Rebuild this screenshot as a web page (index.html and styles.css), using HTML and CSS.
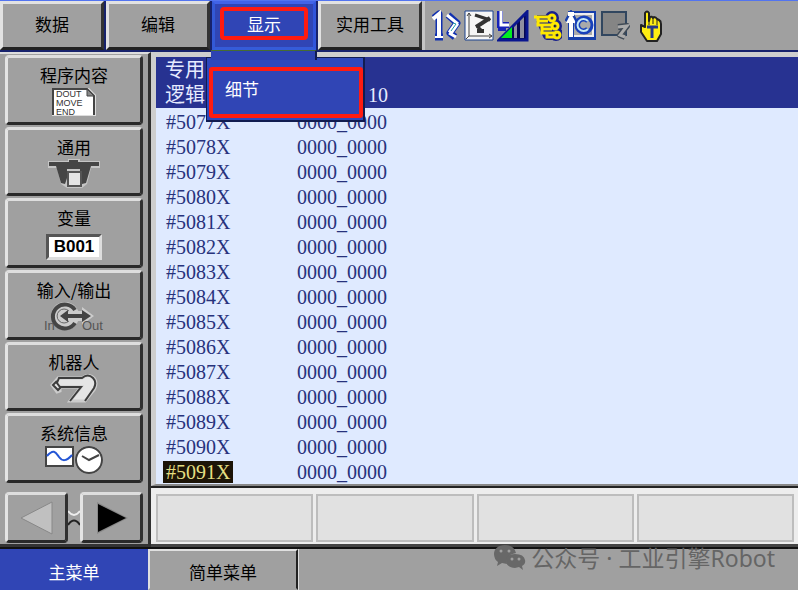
FILE: index.html
```html
<!DOCTYPE html>
<html lang="zh-CN">
<head>
<meta charset="utf-8">
<title>专用输入</title>
<link rel="stylesheet" href="styles.css">
</head>
<body>
<div class="pendant">
  <header class="top">
    <nav class="menus">
      <button class="menu">数据</button>
      <button class="menu">编辑</button>
      <div class="menu-wrap">
        <button class="menu active"><span class="mark">显示</span></button>
        <div class="dropdown"><button class="item">细节</button></div>
      </div>
      <button class="menu">实用工具</button>
    </nav>
    <div class="status">
      <svg width="30" height="32" viewBox="0 0 30 32"><g fill="none" stroke="#1030b0" stroke-width="7" stroke-linejoin="round"><path d="M3 8l5-4v23M4 27h8M17 5l9 8-7 10 5 4"/></g><g fill="none" stroke="#fff"><path d="M2 9l6-5v24" stroke-width="4"/><path d="M4 27h8" stroke-width="2"/><path d="M16 5l11 9" stroke-width="3"/><path d="M26 13l-7 10" stroke-width="5"/><path d="M18 23l7 4" stroke-width="3"/></g><path d="M22 13l3 1-5 7" fill="none" stroke="#1f9aa8"/></svg>
      <svg width="30" height="32" viewBox="0 0 30 32"><path d="M1 1h28v29H1z" fill="#f6f6f6" stroke="#1b438f"/><path d="M5 3v23h23M3 6l2-3 2 3M25 24l3 2-3 2M5 26l-3 3" fill="none" stroke="#444" stroke-width="1"/><path d="M11 5l15 5" fill="none" stroke="#333" stroke-width="3"/><path d="M26 8L12 17" fill="none" stroke="#333" stroke-width="4"/><path d="M13 16l6 6" fill="none" stroke="#333" stroke-width="3"/><path d="M13 19h7v4h-7z" fill="#333"/></svg>
      <svg width="32" height="32" viewBox="0 0 32 32"><path d="M3 1v14h9M1 18h8" fill="none" stroke="#1722b8" stroke-width="6"/><path d="M4 1v14h8" fill="none" stroke="#fff" stroke-width="3"/><path d="M2 30L30 2v28z" fill="#080850" stroke="#0a168f" stroke-width="3"/><path d="M4 28l11-11v11z" fill="#00ed20"/><path d="M17 28V17l3-3v14zM23 28V11l4-4v21z" fill="#8f8fa0"/></svg>
      <svg width="30" height="32" viewBox="0 0 30 32"><g fill="none" stroke="#18208b" stroke-width="8" stroke-linejoin="round"><path d="M5 9h13M7 14h16M12 22h12M8 10l7 16h5"/><circle cx="20" cy="8" r="3"/><circle cx="23" cy="16" r="3"/><circle cx="24" cy="24" r="3"/></g><g fill="none" stroke="#ffe900" stroke-width="3"><path d="M2 7h16M6 7v8h15M6 11h10M10 15v8h12M10 19h10M15 23v4h8"/><circle cx="20" cy="8" r="3"/><circle cx="23" cy="16" r="3"/><circle cx="25" cy="25" r="3"/></g><g fill="#222"><circle cx="20" cy="8" r="1"/><circle cx="23" cy="16" r="1"/><circle cx="25" cy="25" r="1"/></g></svg>
      <svg class="after" width="32" height="32" viewBox="0 0 32 32"><path d="M3 1h28v29H3z" fill="#173faa"/><path d="M7 4h21v22H7z" fill="#aaa" stroke="#eee" stroke-width="2"/><path d="M6 28V7M2 12l4-7 4 7" fill="none" stroke="#173faa" stroke-width="6"/><path d="M6 27V7" fill="none" stroke="#fff" stroke-width="4"/><path d="M1 13l5-10 5 10zM3 2h6v4H3z" fill="#fff"/><circle cx="19" cy="15" r="8" fill="none" stroke="#1740bb" stroke-width="3"/><path d="M23 11a6 6 0 1 0 0 8" fill="none" stroke="#1740bb" stroke-width="5"/><path d="M23 11a6 6 0 1 0 0 8" fill="none" stroke="#c4e8f5" stroke-width="2"/></svg>
      <svg width="32" height="32" viewBox="0 0 32 32"><path d="M2 2h24v23H2z" fill="#858585" stroke="#31465f" stroke-width="2"/><path d="M18 17l9-1-7 9 5 2" fill="none" stroke="#404a55" stroke-width="6" stroke-linejoin="round"/><path d="M18 17l9-1-7 9 5 2" fill="none" stroke="#aaa" stroke-width="3"/></svg>
      <svg class="hand" width="24" height="32" viewBox="0 0 24 32"><path d="M6 3q2-3 4 0v8l1-4q2-1 3 1l1-1q2 0 3 2l2 1q2 1 2 4v10l-4 7H8L2 22v-7l4 2z" fill="#ffee12" stroke="#222" stroke-width="2" stroke-linejoin="round"/><path d="M10 9v6M14 9v5M18 10v5" stroke="#222"/><path d="M8 17h11M13 17v11" fill="none" stroke="#253889" stroke-width="3"/></svg>
    </div>
  </header>
  <div class="workspace">
    <aside class="side">
      <div class="side-list">
        <button class="side-button"><span>程序内容</span><svg width="46" height="30" viewBox="0 0 46 30"><path d="M1 1h37l7 7v21H1z" fill="#ddd"/><path d="M2 28V2h34l7 7v19" fill="#fff" stroke="#444" stroke-width="2"/><path d="M36 2v7h7z" fill="#888" stroke="#444"/><g class="code"><text x="5" y="10">DOUT</text><text x="5" y="19">MOVE</text><text x="5" y="28">END</text></g></svg></button>
        <button class="side-button"><span>通用</span><svg width="54" height="30" viewBox="0 0 54 30"><path d="M1 2h20V0h12v2h20v7h-9l-4 16-5 4H20l-6-4-4-16H1z" fill="#c5c5c5"/><path d="M2 3h20V1h9v2h21v4h-8l-5 17-4 1-2-6V10H20v9l-2 6-4-1L9 7H2z" fill="#454545"/><path d="M21 13h13v14H21z" fill="#e3e3e3" stroke="#555" stroke-width="2"/></svg></button>
        <button class="side-button"><span>变量</span><b class="value">B001</b></button>
        <button class="side-button"><span>输入/输出</span><svg width="62" height="32" viewBox="0 0 62 32"><circle cx="22" cy="14" r="14" fill="#ccc"/><path d="M20 9h19V5l12 9-12 9v-4H20z" fill="#ccc"/><path d="M32 8a12 12 0 1 0 0 13" fill="none" stroke="#454545" stroke-width="4"/><path d="M26 9a7 7 0 1 0 0 10" fill="none" stroke="#666"/><path d="M17 14l8-6v4h14V8l9 6-9 6v-4H25v4z" fill="#444"/><g class="io"><text x="1" y="28">In</text><text x="39" y="28">Out</text></g></svg></button>
        <button class="side-button"><span>机器人</span><svg width="48" height="30" viewBox="0 0 48 30"><path d="M20 27l11-14H10v4l-3 1-5-7 6-7h24q7-5 12 0 4 5 0 12l-9 11z" fill="#e5e5e5" stroke="#ccc" stroke-width="3"/><path d="M20 27l11-14H10L7 9l2-5h23q6-5 11 0 4 4 1 10L35 27M7 7l-4 4 5 5 3-3" fill="none" stroke="#3d3d3d" stroke-width="2"/></svg></button>
        <button class="side-button"><span>系统信息</span><svg width="58" height="30" viewBox="0 0 58 30"><path d="M1 2h27v19H1z" fill="#fff" stroke="#444" stroke-width="2"/><path d="M2 11c7-8 9-3 12 1s7 5 13-2" fill="none" stroke="#2355d5" stroke-width="2"/><circle cx="44" cy="15" r="14" fill="#ddd"/><circle cx="44" cy="15" r="13" fill="#fff" stroke="#444" stroke-width="2"/><path d="M37 11l7 4 10-5" fill="none" stroke="#444" stroke-width="2"/></svg></button>
      </div>
      <div class="pager">
        <button class="page-button" aria-label="上一页"><svg width="36" height="36" viewBox="0 0 36 36"><path d="M2 18L33 2v32z" fill="#c0c0c0" stroke="#888"/></svg></button>
        <svg class="link" width="12" height="18" viewBox="0 0 12 18"><path d="M0 2q6 8 12 0" fill="none" stroke="#eee" stroke-width="2"/><path d="M0 16q6-9 12 0" fill="none" stroke="#222" stroke-width="2"/></svg>
        <button class="page-button" aria-label="下一页"><svg width="36" height="36" viewBox="0 0 36 36"><path d="M3 2l31 16L3 34z" fill="#888"/><path d="M4 4l28 14L4 32z" fill="#000"/></svg></button>
      </div>
    </aside>
    <main class="content">
      <section class="screen">
        <div class="heading"><div>专用</div><div class="line"><span>逻辑</span><span class="number">10</span></div></div>
        <table class="signals">
          <tr><td><span>#5077X</span></td><td>0000_0000</td></tr>
          <tr><td><span>#5078X</span></td><td>0000_0000</td></tr>
          <tr><td><span>#5079X</span></td><td>0000_0000</td></tr>
          <tr><td><span>#5080X</span></td><td>0000_0000</td></tr>
          <tr><td><span>#5081X</span></td><td>0000_0000</td></tr>
          <tr><td><span>#5082X</span></td><td>0000_0000</td></tr>
          <tr><td><span>#5083X</span></td><td>0000_0000</td></tr>
          <tr><td><span>#5084X</span></td><td>0000_0000</td></tr>
          <tr><td><span>#5085X</span></td><td>0000_0000</td></tr>
          <tr><td><span>#5086X</span></td><td>0000_0000</td></tr>
          <tr><td><span>#5087X</span></td><td>0000_0000</td></tr>
          <tr><td><span>#5088X</span></td><td>0000_0000</td></tr>
          <tr><td><span>#5089X</span></td><td>0000_0000</td></tr>
          <tr><td><span>#5090X</span></td><td>0000_0000</td></tr>
          <tr class="selected"><td><span>#5091X</span></td><td>0000_0000</td></tr>
        </table>
      </section>
      <div class="slots"><div></div><div></div><div></div><div></div></div>
    </main>
  </div>
  <footer class="bottom">
    <button class="tab current">主菜单</button>
    <button class="tab">简单菜单</button>
    <div class="rest">
      <div class="account">
        <svg width="32" height="26" viewBox="0 0 32 26"><path fill="#686868" d="M11 0C4 0 0 4 0 9q0 5 4 8l-1 4 5-3 5 1q-2-9 9-11Q20 0 11 0z"/><path fill="#686868" d="M21 9c-6 0-9 3-9 7s4 7 9 7l4-1 4 3-1-4q4-2 3-6-1-6-10-6z"/><g fill="#a0a0a0"><circle cx="7" cy="6" r="1.5"/><circle cx="15" cy="6" r="1.5"/><circle cx="18" cy="14" r="1.5"/><circle cx="25" cy="14" r="1.5"/></g></svg>
        <span>公众号 · 工业引擎Robot</span>
      </div>
    </div>
  </footer>
</div>
</body>
</html>
```
FILE: styles.css
```css
* { box-sizing: border-box; }
body { margin: 0; background: #a0a0a0; font-family: "Noto Sans CJK SC", sans-serif; }
button { margin: 0; padding: 0; border: 0; border-radius: 0; font-family: "Noto Sans CJK SC", sans-serif; font-size: 17px; color: #000; }
svg { display: block; flex: none; }
.pendant { display: grid; grid-template-rows: 52px 1fr 43px; min-height: 100vh; }

.top { display: flex; background: #17226c; border-top: 1px solid #5274f0; padding-bottom: 2px; }
.menus { display: grid; grid-template-columns: repeat(4, 104px); gap: 2px; }
.menu { width: 100%; height: 100%; padding-bottom: 4px; background: #a0a0a0; border: 3px solid; border-color: #e2e2e2 #333 #222 #e2e2e2; }
.menu-wrap { position: relative; }
.menu.active { background: #3045b5; color: #fff; border-color: #4163e8 #3155db #355cd9 #3359d7; }
.mark { display: block; width: 88px; margin: 0 auto; border: 4px solid #ff1b10; border-radius: 4px; line-height: 25px; }
.dropdown { position: absolute; z-index: 2; top: 56px; left: -6px; width: 159px; padding: 9px 0 2px 2px; background: #2d48bd; border: 1px solid #111c50; border-right-width: 2px; border-bottom-width: 2px; }
.dropdown::before { content: ""; position: absolute; left: 4px; top: -8px; width: 104px; height: 9px; background: #2d43b2; border-top: 1px solid #456c32; border-right: 2px solid #101a50; }
.item { display: block; width: 154px; height: 51px; background: #3045b5; color: #fff; border: 4px solid #ff1b10; border-radius: 3px; text-align: left; padding: 0 0 8px 12px; }
.status { flex: 1; display: flex; align-items: center; gap: 3px; padding-left: 6px; background: #a0a0a0; border-left: 3px solid #c5c5c5; }
.hand { margin-left: 4px; }

.workspace { display: grid; grid-template-columns: 151px 1fr; }
.side { display: flex; flex-direction: column; background: #a0a0a0; border-top: 2px solid #ddd; border-right: 3px solid #303030; border-bottom: 3px solid #333; padding: 1px 5px 0; }
.side-list { flex: 1; display: grid; grid-template-rows: repeat(6, 1fr); gap: 2px; }
.side-button { display: flex; flex-direction: column; align-items: center; padding-top: 5px; background: #a0a0a0; }
.side-button, .page-button { border: 3px solid; border-color: #dedede #303030 #292929 #e4e4e4; border-radius: 4px; }
.side-button > span { line-height: 24px; }
.code { font: 9px "Liberation Sans", sans-serif; fill: #333; }
.io { font: 13px "Liberation Sans", sans-serif; fill: #555; }
.value { width: 56px; margin-top: 4px; border: 3px solid; border-color: #555 #ddd #ddd #555; background: #fff; font: bold 17px/20px "Liberation Sans", sans-serif; }
.pager { display: grid; grid-template-columns: 1fr 12px 1fr; align-items: center; padding: 9px 0 1px; }
.page-button { height: 51px; display: grid; place-items: center; background: #a0a0a0; }

.content { display: grid; grid-template-rows: 1fr 61px; background: #dcdcdc; }
.screen { background: #dfeaff; border: 4px solid #cecece; border-width: 5px 0 2px 5px; border-bottom-color: #888; color: #27327c; font: 20px/25px "Liberation Serif", "Noto Sans CJK SC", serif; }
.heading { height: 51px; padding: 1px 0 0 9px; background: #273291; color: #e6ebff; }
.line { display: grid; grid-template-columns: 203px 1fr; }
.signals { border-collapse: collapse; }
.signals td { height: 25px; padding: 2px 0 0; line-height: 22px; }
.signals td:first-child { width: 141px; padding-left: 7px; }
.signals span { display: inline-block; padding: 0 3px; }
.selected span { background: #1c1407; color: #e4df83; }
.slots { display: grid; grid-template-columns: repeat(4, 1fr); gap: 3px; padding: 6px 4px 2px 5px; background: #ededed; border-top: 2px solid #222; border-bottom: 3px solid #444; }
.slots div { background: #e1e1e1; border: 2px solid #bdbdbd; }

.bottom { display: grid; grid-template-columns: 148px 150px 1fr; background: #a0a0a0; border-top: 2px solid #111; }
.tab { background: #a0a0a0; border: 2px solid; border-color: #e0e0e0 #222 #a0a0a0 #e0e0e0; padding-top: 4px; }
.current { color: #fff; background: #3045b5; border-color: #3045b5; }
.rest { position: relative; border-left: 1px solid #ddd; }
.account { position: absolute; right: 23px; top: -8px; display: flex; align-items: center; gap: 5px; color: #656565; font-family: "Noto Sans", "Noto Sans CJK SC", sans-serif; font-size: 23px; line-height: 34px; white-space: nowrap; }
```
